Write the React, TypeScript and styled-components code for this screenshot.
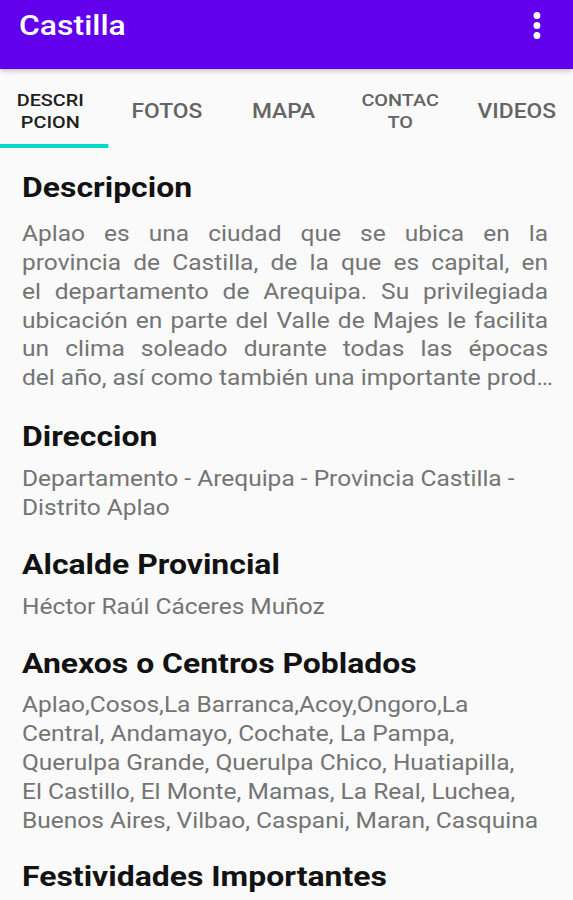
import React from "react";
import styled, { createGlobalStyle } from "styled-components";

/* The reference screen is stretched horizontally (~14%), so the layout is
   built at 573 / 1.14 px wide and scaled back out to the full 573 px. */
const STRETCH = 1.14;
const INNER = 573 / STRETCH;

const Global = createGlobalStyle`
  html, body { margin: 0; padding: 0; background: #fafafa; overflow: hidden; }
  body { font-family: Roboto, "Noto Sans", Arial, sans-serif; }
  * { box-sizing: border-box; }
`;

const Viewport = styled.div`
  width: 573px;
  height: 900px;
  overflow: hidden;
  background: #fafafa;
`;

const Screen = styled.div`
  width: ${INNER}px;
  height: 900px;
  transform: scaleX(${STRETCH});
  transform-origin: 0 0;
  display: flex;
  flex-direction: column;
  background: #fafafa;
`;

const AppBar = styled.header`
  flex: 0 0 69px;
  background: #6200ee;
  display: flex;
  align-items: flex-start;
  justify-content: space-between;
  padding: 8px 25px 0 16.7px;
  box-shadow: 0 2px 4px rgba(0, 0, 0, 0.22);
  position: relative;
  z-index: 2;
`;

const Title = styled.h1`
  margin: 0;
  color: #ffffff;
  font-size: 28px;
  font-weight: 500;
  line-height: 36px;
`;

const Kebab = styled.div`
  width: 14px;
  display: flex;
  flex-direction: column;
  align-items: center;
  gap: 3px;
  padding-top: 4px;
`;

const Dot = styled.span`
  width: 6px;
  height: 7px;
  border-radius: 50%;
  background: #ffffff;
`;

const TabStrip = styled.nav`
  flex: 0 0 80px;
  display: flex;
  margin-left: -7px;
  background: #fafafa;
`;

const Tab = styled.div<{ $active?: boolean; $small?: boolean }>`
  position: relative;
  flex: 0 0 102.3px;
  display: flex;
  align-items: center;
  justify-content: center;
  padding-top: 4px;
  text-align: center;
  white-space: pre-line;
  font-weight: 500;
  font-size: ${(p) => (p.$small ? "17.4px" : "20px")};
  line-height: ${(p) => (p.$small ? "22px" : "24px")};
  color: ${(p) => (p.$active ? "#1e1e1e" : "#646464")};
`;

const Indicator = styled.span`
  position: absolute;
  left: 0;
  right: 0;
  bottom: 1px;
  height: 4px;
  background: #03dac5;
`;

const Content = styled.main`
  padding: 22.4px 21.9px 0 19.3px;
  display: flex;
  flex-direction: column;
`;

const Heading = styled.h2<{ $gap: number }>`
  margin: 0 0 ${(p) => p.$gap}px 0;
  font-size: 28px;
  line-height: 34px;
  font-weight: 700;
  color: #121212;
`;

const Body = styled.p<{ $gap: number }>`
  margin: 0 0 ${(p) => p.$gap}px 0;
  font-size: 21.5px;
  line-height: 28.8px;
  color: #747474;
`;

const Line = styled.span<{ $justify?: boolean }>`
  display: block;
  white-space: nowrap;
  ${(p) =>
    p.$justify
      ? `white-space: normal; text-align: justify; text-align-last: justify;`
      : ""}
`;

type Section = {
  title: string;
  lines?: string[];
  justify?: boolean;
  headGap: number;
  bodyGap: number;
};

const sections: Section[] = [
  {
    title: "Descripcion",
    lines: [
      "Aplao es una ciudad que se ubica en la",
      "provincia de Castilla, de la que es capital, en",
      "el departamento de Arequipa. Su privilegiada",
      "ubicación en parte del Valle de Majes le facilita",
      "un clima soleado durante todas las épocas",
      "del año, así como también una importante prod…",
    ],
    justify: true,
    headGap: 14.8,
    bodyGap: 27.4,
  },
  {
    title: "Direccion",
    lines: ["Departamento - Arequipa - Provincia Castilla -", "Distrito Aplao"],
    headGap: 10.8,
    bodyGap: 25.1,
  },
  {
    title: "Alcalde Provincial",
    lines: ["Héctor Raúl Cáceres Muñoz"],
    headGap: 10.8,
    bodyGap: 25.1,
  },
  {
    title: "Anexos o Centros Poblados",
    lines: [
      "Aplao,Cosos,La Barranca,Acoy,Ongoro,La",
      "Central, Andamayo, Cochate, La Pampa,",
      "Querulpa Grande, Querulpa Chico, Huatiapilla,",
      "El Castillo, El Monte, Mamas, La Real, Luchea,",
      "Buenos Aires, Vilbao, Caspani, Maran, Casquina",
    ],
    headGap: 10.8,
    bodyGap: 25.1,
  },
  { title: "Festividades Importantes", headGap: 10.8, bodyGap: 25.1 },
];

const tabs = [
  { label: "DESCRI\nPCION", small: true, active: true },
  { label: "FOTOS" },
  { label: "MAPA" },
  { label: "CONTAC\nTO", small: true },
  { label: "VIDEOS" },
];

export default function App() {
  return (
    <Viewport>
      <Global />
      <Screen>
        <AppBar>
          <Title>Castilla</Title>
          <Kebab aria-label="Más opciones">
            <Dot />
            <Dot />
            <Dot />
          </Kebab>
        </AppBar>
        <TabStrip>
          {tabs.map((t) => (
            <Tab key={t.label} $active={t.active} $small={t.small}>
              {t.label}
              {t.active && <Indicator />}
            </Tab>
          ))}
        </TabStrip>
        <Content>
          {sections.map((s) => (
            <React.Fragment key={s.title}>
              <Heading $gap={s.headGap}>{s.title}</Heading>
              {s.lines && (
                <Body $gap={s.bodyGap}>
                  {s.lines.map((l, i) => (
                    <Line
                      key={i}
                      $justify={s.justify && i < s.lines!.length - 1}
                    >
                      {l}
                    </Line>
                  ))}
                </Body>
              )}
            </React.Fragment>
          ))}
        </Content>
      </Screen>
    </Viewport>
  );
}
